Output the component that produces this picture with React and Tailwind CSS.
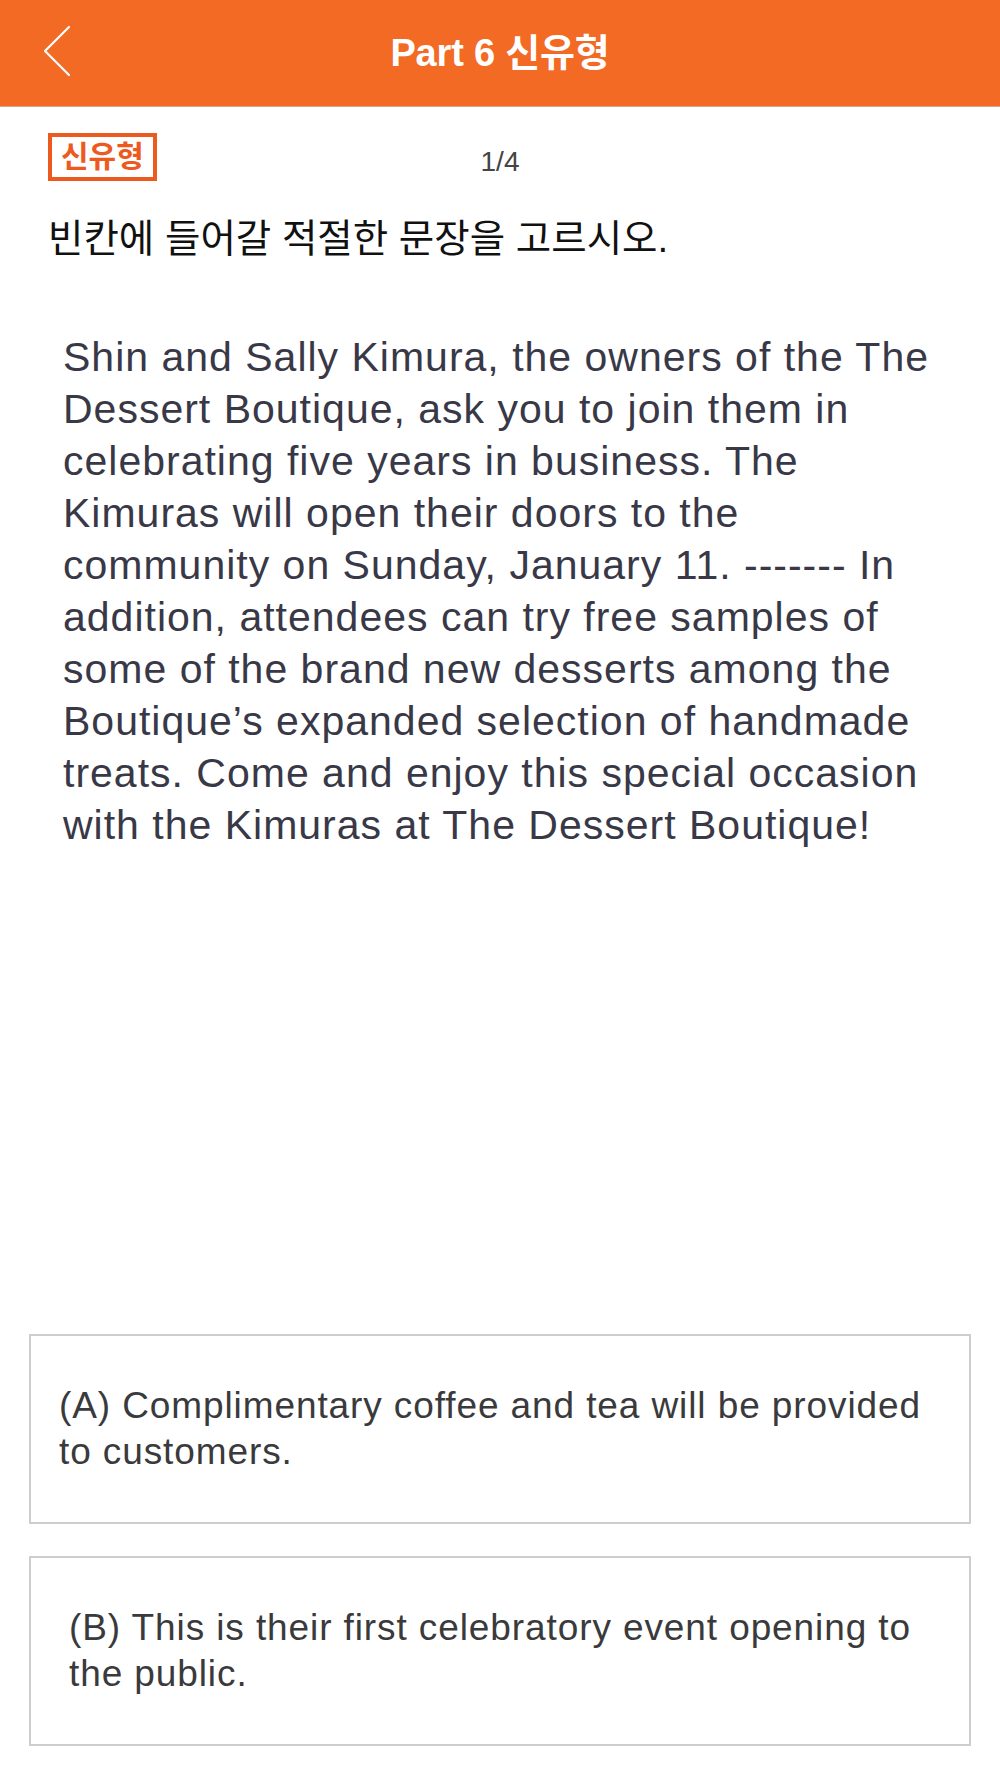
import React from "react";

const font = { fontFamily: '"Liberation Sans", "Noto Sans CJK KR", sans-serif' };

function Header() {
  return (
    <div className="relative h-[107px] bg-[#F26A24] border-b border-[#d4a58a] flex items-center justify-center">
      <button className="absolute left-[40px] top-[24px] w-[34px] h-[54px] flex items-center justify-center">
        <svg width="30" height="52" viewBox="0 0 30 52" fill="none">
          <polyline
            points="27,2 3,26 27,50"
            stroke="#ffffff"
            strokeWidth="2.2"
            strokeLinecap="round"
            strokeLinejoin="round"
          />
        </svg>
      </button>
      <h1 className="text-white text-[38px] font-semibold leading-none tracking-[-0.2px]">
        Part 6 신유형
      </h1>
    </div>
  );
}

function Choice({ text, pad }) {
  return (
    <div
      className={`h-[190px] border-2 border-[#cdcdcd] flex items-center ${pad} pr-[24px]`}
    >
      <p className="text-[37px] leading-[46px] text-[#3a3a3c] tracking-[0.9px]">
        {text}
      </p>
    </div>
  );
}

function App() {
  return (
    <div className="min-h-[1778px] bg-white flex flex-col" style={font}>
      <Header />

      {/* 뱃지 + 문항 번호 */}
      <div className="grid grid-cols-[1fr_auto_1fr] items-center px-[48px] pt-[24px]">
        <div>
          <span className="inline-block border-[4px] border-[#EC5A1F] text-[#EC5A1F] text-[30px] font-bold leading-[40px] px-[9px]">
            신유형
          </span>
        </div>
        <span className="text-[28px] text-[#444] mt-[10px]">1/4</span>
        <div />
      </div>

      <p className="px-[48px] mt-[32px] text-[38.5px] leading-[48px] text-[#111]">
        빈칸에 들어갈 적절한 문장을 고르시오.
      </p>

      <p className="pl-[63px] pr-[56px] mt-[68px] text-[41px] leading-[52px] tracking-[1px] text-[#393847]">
        Shin and Sally Kimura, the owners of the The Dessert Boutique, ask you
        to join them in celebrating five years in business. The Kimuras will
        open their doors to the community on Sunday, January 11. ------- In
        addition, attendees can try free samples of some of the brand new
        desserts among the Boutique’s expanded selection of handmade treats.
        Come and enjoy this special occasion with the Kimuras at The Dessert
        Boutique!
      </p>

      <div className="mt-auto px-[29px] pb-[32px] flex flex-col gap-[32px]">
        <Choice
          text="(A) Complimentary coffee and tea will be provided to customers."
          pad="pl-[28px]"
        />
        <Choice
          text="(B) This is their first celebratory event opening to the public."
          pad="pl-[38px]"
        />
      </div>
    </div>
  );
}

export default App;
